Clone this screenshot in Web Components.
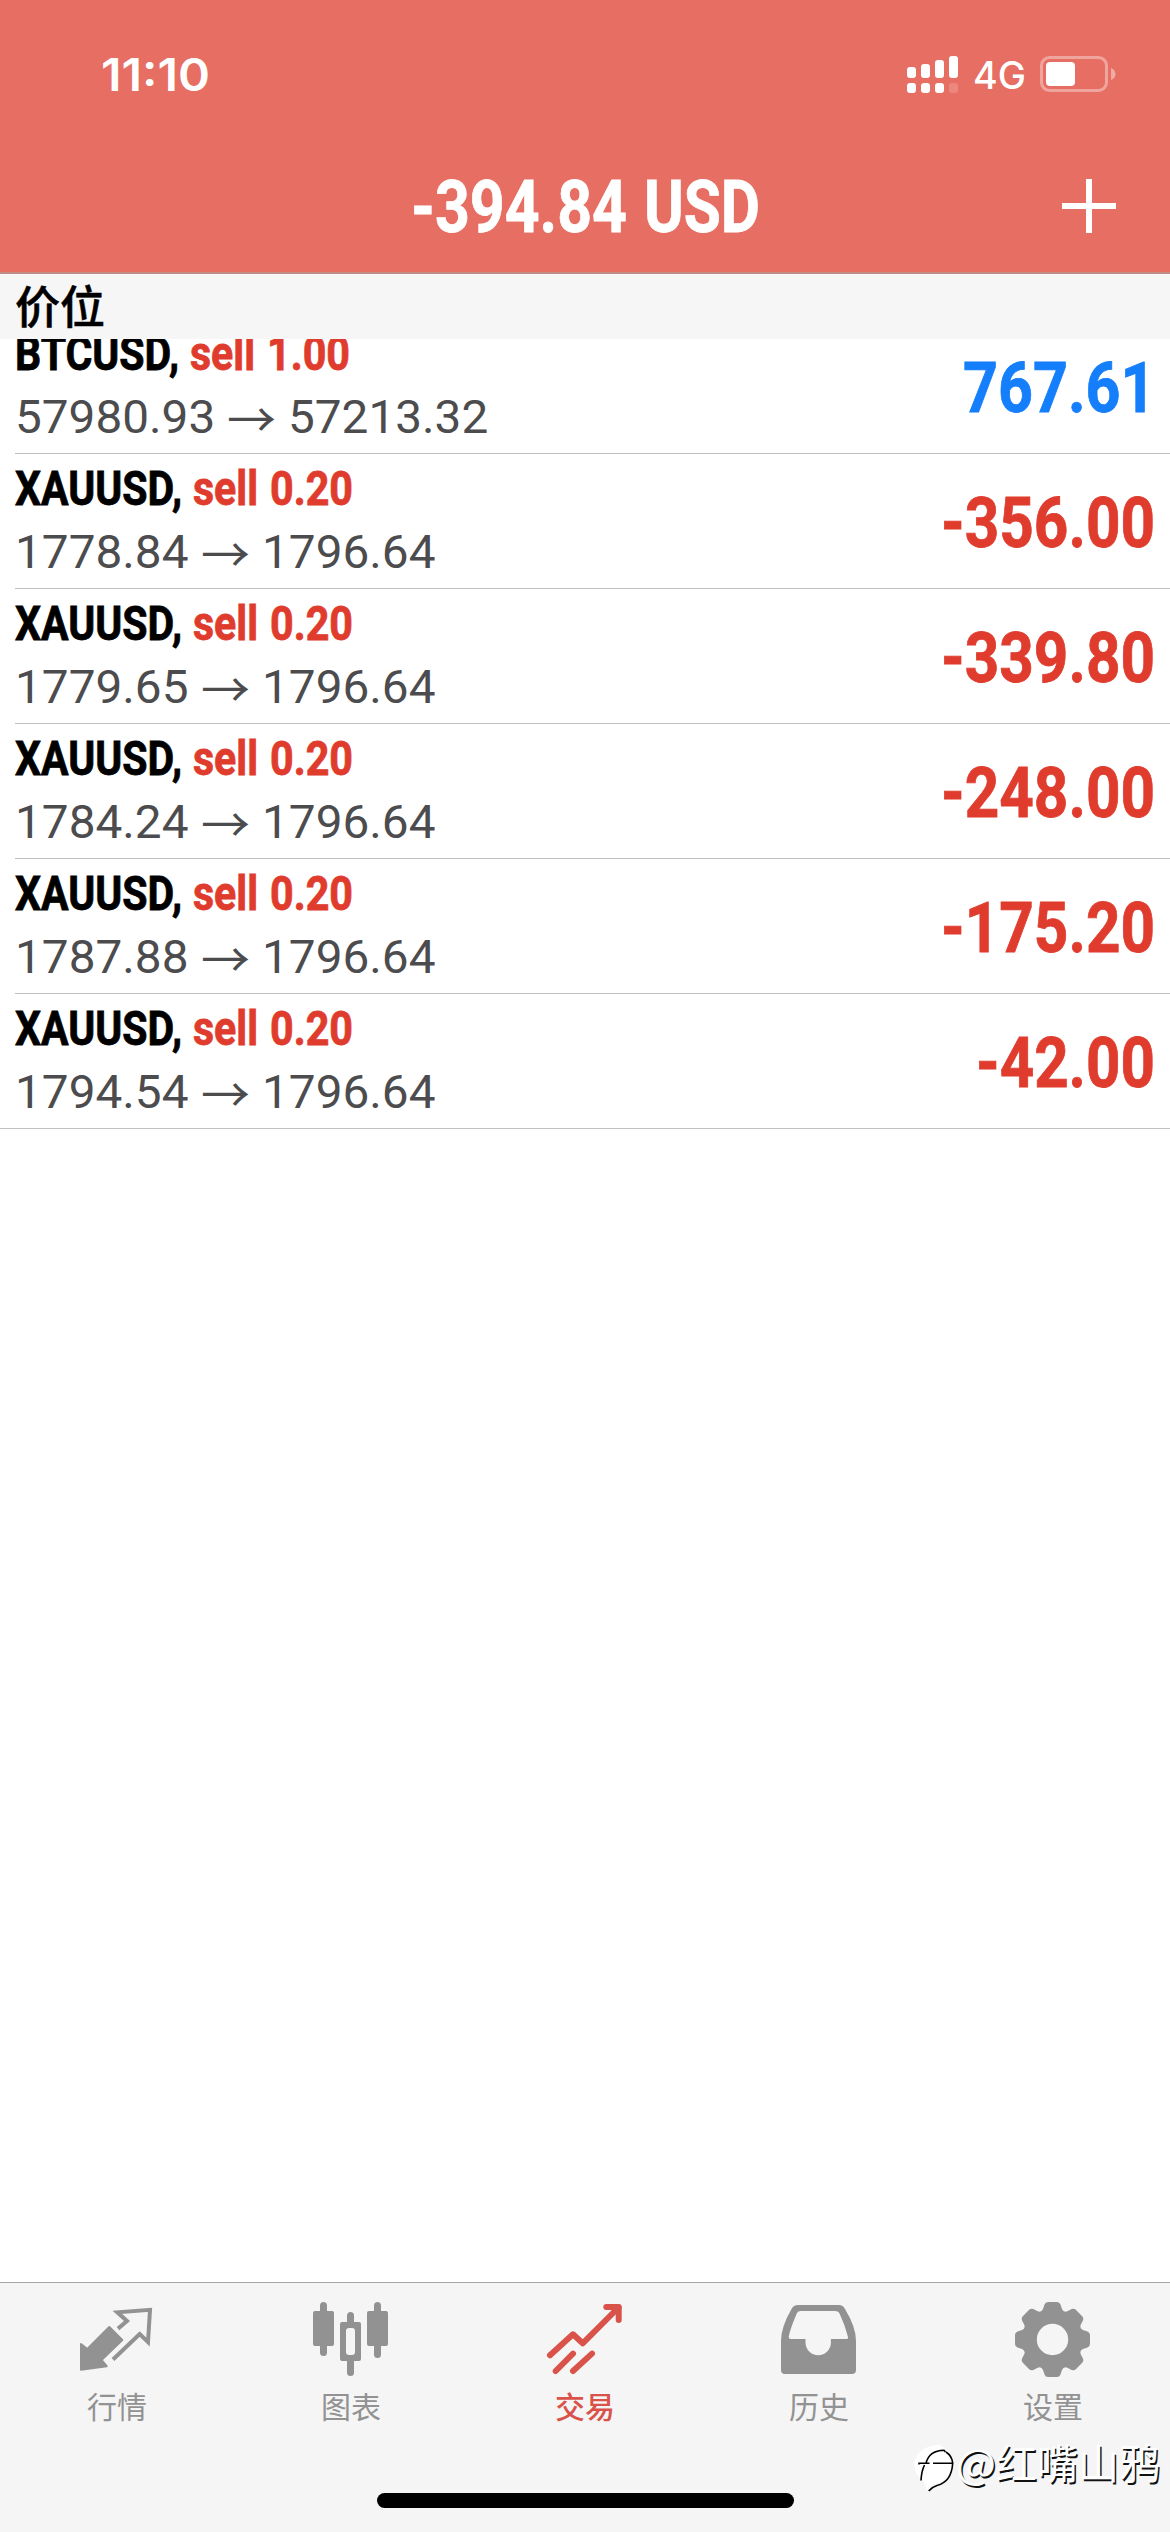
<!DOCTYPE html>
<html lang="zh-CN">
<head>
<meta charset="utf-8">
<title>交易</title>
<style>
html, body { margin: 0; padding: 0; background: #fff; }
body { width: 1170px; height: 2532px; overflow: hidden; font-family: Roboto, "Liberation Sans", "Noto Sans CJK SC", sans-serif; }
</style>
</head>
<body>
<trade-app></trade-app>
<script>
const define = (name, html, setup) => {
  const tpl = document.createElement('template');
  tpl.innerHTML = html;
  customElements.define(name, class extends HTMLElement {
    connectedCallback() {
      if (this.shadowRoot) return;
      this.attachShadow({ mode: 'open' }).append(tpl.content.cloneNode(true));
      if (setup) setup(this, this.shadowRoot);
    }
  });
};

/* Text squeezed horizontally to the advance width given in "w". */
define('fit-text', `
<style>
:host { display: inline-block; white-space: nowrap; flex: none; }
span { display: inline-block; transform-origin: 0 50%; white-space: pre; }
</style><span><slot></slot></span>`, (el, root) => {
  const w = parseFloat(el.getAttribute('w'));
  const span = root.querySelector('span');
  const natural = span.getBoundingClientRect().width;
  el.style.width = w + 'px';
  span.style.transform = `scaleX(${w / natural})`;
});

define('status-bar', `
<style>
:host { display: flex; height: 144px; box-sizing: border-box; padding: 46px 54px 0 101px; justify-content: space-between; align-items: flex-start; color: #fff; font-family: Inter, sans-serif; }
.time { font-size: 45.5px; font-weight: 560; line-height: 58px; }
.right { display: flex; align-items: flex-start; }
.sig { margin-top: 10px; }
.net { font-size: 37.5px; font-weight: 500; line-height: 56px; margin: 2px 14px 0 15px; }
.bat { margin-top: 10px; }
svg { display: block; }
</style>
<div class="time"><fit-text w="109">11:10</fit-text></div>
<div class="right">
<svg class="sig" width="51" height="38" viewBox="0 0 51 38" fill="#fff">
<rect x="0" y="11" width="9" height="11" rx="3"/><rect x="14" y="8" width="9" height="14" rx="3"/><rect x="28" y="4" width="9" height="18" rx="3"/><rect x="42" y="0" width="9" height="22" rx="3"/>
<rect x="0" y="27" width="9" height="10" rx="3"/><rect x="14" y="27" width="9" height="10" rx="3"/><rect x="28" y="27" width="9" height="10" rx="3"/><rect x="42" y="27" width="9" height="10" rx="3" opacity=".18"/>
</svg>
<div class="net"><fit-text w="53">4G</fit-text></div>
<svg class="bat" width="76" height="36" viewBox="0 0 76 36">
<rect x="1.5" y="1.5" width="65" height="33" rx="8" fill="none" stroke="#fff" stroke-opacity=".38" stroke-width="3"/>
<rect x="6" y="6" width="29" height="24" rx="4" fill="#fff"/>
<path d="M71 12 Q75.5 14 75.5 18 Q75.5 22 71 24Z" fill="#fff" opacity=".42"/>
</svg>
</div>`);

define('balance-bar', `
<style>
:host { display: grid; grid-template-columns: 1fr auto 1fr; height: 128px; color: #fff; align-items: start; }
.sum { grid-column: 2; display: flex; gap: 17px; font-size: 71.5px; line-height: 80px; font-weight: 700; margin-top: 24px; -webkit-text-stroke: .8px #fff; }
svg { justify-self: end; margin: 35px 54px 0 0; }
</style>
<div class="sum"><fit-text w="216">-394.84</fit-text><fit-text w="116">USD</fit-text></div>
<svg width="54" height="54" viewBox="0 0 54 54" stroke="#fff" stroke-width="6"><path d="M27 0V54M0 27H54"/></svg>`);

define('app-header', `
<style>:host { display: block; height: 272px; background: #e66e62; border-bottom: 2px solid #c08a86; box-sizing: content-box; }</style>
<status-bar></status-bar><balance-bar></balance-bar>`);

define('section-title', `
<style>:host { display: block; height: 65px; background: #f6f6f6; box-sizing: border-box; padding-left: 15px; font: 500 45px/61px "Noto Sans CJK SC", sans-serif; color: #000; -webkit-text-stroke: .5px #000; }</style>
<slot></slot>`);

define('position-row', `
<style>
:host { display: block; padding-left: 15px; }
:host([last]) { padding-left: 0; }
.in { display: flex; justify-content: space-between; height: 134px; padding-right: 15px; border-bottom: 1px solid #c0c0c2; align-items: flex-start; }
:host([last]) .in { padding-left: 15px; }
.left { display: flex; flex-direction: column; gap: 7px; padding-top: 7px; }
.title { display: flex; font-size: 47.5px; line-height: 56px; font-weight: 700; color: #000; -webkit-text-stroke: .8px currentColor; }
.side { color: #e03c2e; margin-left: 11px; display: flex; gap: 12px; }
.price { display: flex; gap: 12px; font-size: 46.5px; line-height: 56px; color: #4c4c4e; }
.arrow { font-family: "Noto Sans CJK SC", sans-serif; }
.profit { font-size: 70.5px; line-height: 80px; font-weight: 700; margin-top: 29px; color: #e03c2e; -webkit-text-stroke: .8px currentColor; }
.profit.up { color: #157efb; }
</style>
<div class="in">
<div class="left"><div class="title"></div><div class="price"></div></div>
<div class="profit"></div>
</div>`, (el, root) => {
  const a = n => el.getAttribute(n);
  const advance = (s, digit, dot, dash) => [...s].reduce((t, c) => t + (c === '.' ? dot : c === '-' ? dash : digit), 0);
  const price = s => `<fit-text w="${advance(s, 26.7, 13.3, 0)}">${s}</fit-text>`;
  root.querySelector('.title').innerHTML =
    `<fit-text w="${a('symw')}">${a('symbol')},</fit-text><div class="side"><fit-text w="65">sell</fit-text><fit-text w="83">${a('lots')}</fit-text></div>`;
  root.querySelector('.price').innerHTML =
    `${price(a('from'))}<fit-text class="arrow" w="49">→</fit-text>${price(a('to'))}`;
  const p = root.querySelector('.profit');
  if (!a('profit').startsWith('-')) p.classList.add('up');
  p.innerHTML = `<fit-text w="${advance(a('profit'), 35, 17.5, 21.5)}">${a('profit')}</fit-text>`;
});

define('position-list', `
<style>
:host { display: block; flex: 1; overflow: hidden; background: #fff; }
.rows { margin-top: -20px; }
</style>
<div class="rows"><slot></slot></div>`);

const icons = {
  quotes: `<path fill="currentColor" stroke="currentColor" stroke-width="2" stroke-linejoin="round" d="M9 49L15.3 54L37.3 32L50.3 45L29.5 65L34.7 71.2L9 74.7Z"/><path fill="none" stroke="currentColor" stroke-width="4" d="M46 33.6L55 26L45.3 17.3L78 14.8L76 47L67.7 39L41 64.5"/>`,
  chart: `<g fill="currentColor"><rect x="7" y="16" width="21" height="35" rx="2"/><rect x="14" y="7" width="7" height="54" rx="3.5"/><rect x="61" y="16" width="21" height="35" rx="2"/><rect x="68" y="7" width="7" height="56" rx="3.5"/><rect x="41" y="17" width="7" height="14" rx="3.5"/><rect x="41" y="60" width="7" height="21" rx="3.5"/><path fill-rule="evenodd" d="M36 27H53a2 2 0 0 1 2 2V64a2 2 0 0 1-2 2H36a2 2 0 0 1-2-2V29a2 2 0 0 1 2-2ZM43 33a3 3 0 0 0-3 3V57a3 3 0 0 0 3 3h3a3 3 0 0 0 3-3V36a3 3 0 0 0-3-3Z"/></g>`,
  trade: `<g fill="none" stroke="currentColor" stroke-width="6" stroke-linecap="round" stroke-linejoin="round"><path d="M10 60.3L33 39.3L42.7 48.3L78.5 12.5"/><path d="M66.3 12H78.7V25"/><path fill="currentColor" stroke="none" d="M70 12H79V22Z"/><path d="M15.7 76L33 58.6M33 76L52 58.6"/></g>`,
  history: `<path fill="currentColor" fill-rule="evenodd" d="M24 10H65Q69 10 71 14Q82 32 82 46V75Q82 79 78 79H11Q7 79 7 75V46Q7 32 17.500 14Q19.500 10 24 10ZM26.500 16Q24 16 23 18Q16 34 14.700 42Q14.500 44 17 44H31.500V47.500A12.700 12.700 0 0 0 56.900 47.500V44H72Q74.500 44 74 42Q71 30 65.500 18.500Q64.500 16 61 16Z"/>`,
  settings: (() => {
    const rot = (x, y, i) => {
      const t = i * Math.PI / 4, c = Math.cos(t), s = Math.sin(t);
      return (44.5 + x * c - y * s).toFixed(2) + ' ' + (44.5 + x * s + y * c).toFixed(2);
    };
    let d = '';
    for (let i = 0; i < 8; i++) {
      const p = (x, y) => rot(x, y, i);
      d += `${i ? 'L' : 'M'}${p(-9.5, -30.500)}L${p(-8, -35)}Q${p(-7, -37.500)} ${p(-4.500, -37.500)}L${p(4.500, -37.500)}Q${p(7, -37.500)} ${p(8, -35)}L${p(9.500, -30.500)}Q${p(11, -26.800)} ${rot(-9.500, -30.500, i + 1)}`;
    }
    return `<path fill="currentColor" fill-rule="evenodd" d="${d}ZM28.800 44.500a15.700 15.700 0 1 0 31.400 0a15.700 15.700 0 1 0 -31.400 0Z"/>`;
  })()
};

define('tab-item', `
<style>
:host { display: flex; flex: 1; flex-direction: column; align-items: center; color: #929292; font: 400 30px/40px "Noto Sans CJK SC", sans-serif; padding-top: 12px; }
:host([active]) { color: #d9534a; font-weight: 500; }
svg { display: block; width: 90px; height: 90px; }
</style>
<svg viewBox="0 0 90 90"></svg><div class="label"><slot></slot></div>`, (el, root) => {
  root.querySelector('svg').innerHTML = icons[el.getAttribute('icon')];
});

define('tab-bar', `
<style>
:host { display: flex; flex-direction: column; height: 250px; box-sizing: border-box; background: #f5f5f5; border-top: 1px solid #a6a6a8; align-items: center; }
.tabs { display: flex; width: 100%; height: 210px; }
.home { width: 417px; height: 15px; border-radius: 7.5px; background: #000; }
</style>
<div class="tabs"><slot></slot></div><div class="home"></div>`);

define('author-mark', `
<style>
:host { position: absolute; left: 909px; top: 2433px; display: flex; align-items: flex-start; color: #fff; }
svg { display: block; margin-top: 7px; }
.name { font: 400 41px/56px "Noto Sans CJK SC", sans-serif; text-shadow: 1.5px 1.500px 0 #111; margin-left: -3px; display: flex; }
</style>
<svg width="50" height="56" viewBox="0 0 50 56">
<path fill="#fff" d="M5 24Q8 6 30 5Q42 9 43 23Q42 40 26 44L18 50L14 40Q6 36 5 24Z"/>
<path fill="none" stroke="#000" stroke-width="1.600" d="M10 24.500V23.300H20.500M12 40.500Q12.500 31 15.500 25M17 23.300Q20 10.500 35 10.200L36.500 12M24 23.300H43.700Q42.500 42 28 45.500Q23 47 19.700 51M37 12Q43 16 43.700 23"/>
</svg>
<div class="name"><fit-text w="40">@</fit-text><span>红嘴山鸦</span></div>`);

define('trade-app', `
<style>:host { display: flex; flex-direction: column; position: relative; width: 1170px; height: 2532px; overflow: hidden; background: #fff; }</style>
<app-header></app-header>
<section-title>价位</section-title>
<position-list>
<position-row symbol="BTCUSD" symw="164" lots="1.00" from="57980.93" to="57213.32" profit="767.61"></position-row>
<position-row symbol="XAUUSD" symw="167" lots="0.20" from="1778.84" to="1796.64" profit="-356.00"></position-row>
<position-row symbol="XAUUSD" symw="167" lots="0.20" from="1779.65" to="1796.64" profit="-339.80"></position-row>
<position-row symbol="XAUUSD" symw="167" lots="0.20" from="1784.24" to="1796.64" profit="-248.00"></position-row>
<position-row symbol="XAUUSD" symw="167" lots="0.20" from="1787.88" to="1796.64" profit="-175.20"></position-row>
<position-row symbol="XAUUSD" symw="167" lots="0.20" from="1794.54" to="1796.64" profit="-42.00" last></position-row>
</position-list>
<tab-bar>
<tab-item icon="quotes">行情</tab-item>
<tab-item icon="chart">图表</tab-item>
<tab-item icon="trade" active>交易</tab-item>
<tab-item icon="history">历史</tab-item>
<tab-item icon="settings">设置</tab-item>
</tab-bar>
<author-mark></author-mark>`);
</script>
</body>
</html>
